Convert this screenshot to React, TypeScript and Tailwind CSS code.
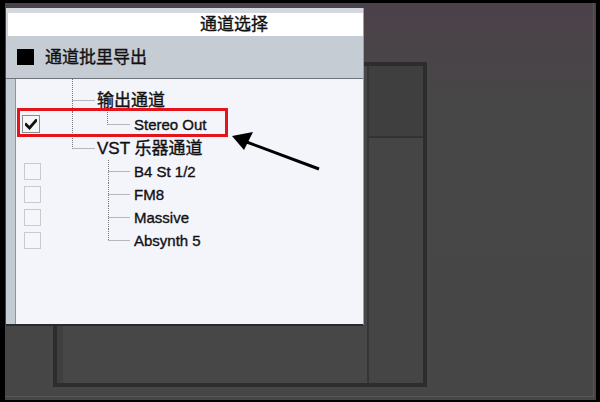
import React from "react";

const FONT = "font-['Liberation_Sans','Noto_Sans_CJK_SC',sans-serif]";
const DOT = "#7a7a7a";
const TXT = "text-[#111] [-webkit-text-stroke:0.35px_#111]";

function Gutter({ w, h, lines }: { w: number; h: number; lines: [number, number, number, number][] }) {
  return (
    <svg width={w} height={h} className="shrink-0 block">
      {lines.map(([x1, y1, x2, y2], i) => (
        <line key={i} x1={x1} y1={y1} x2={x2} y2={y2} stroke={DOT} strokeWidth={1} strokeDasharray="1 1" />
      ))}
    </svg>
  );
}

function Box({ checked, ml }: { checked?: boolean; ml: string }) {
  return (
    <div className={`w-[44px] shrink-0 flex items-center`}>
      {checked ? (
        <div className={`${ml} w-[18px] h-[18px] border border-[#8a8a8a] bg-[#f6f6fa] flex items-center justify-center`}>
          <svg width="12" height="11" viewBox="0 0 12 11">
            <path d="M1 5.5 L4.5 9 L11 1.5" fill="none" stroke="#111" strokeWidth="2.8" strokeLinecap="square" />
          </svg>
        </div>
      ) : (
        <div className={`${ml} w-[17px] h-[17px] border border-[#c9cacd] bg-[#f6f6fa]`} />
      )}
    </div>
  );
}

export default function App() {
  const children = ["B4 St 1/2", "FM8", "Massive", "Absynth 5"];
  return (
    <div className={`relative w-[600px] h-[402px] bg-black pt-[3px] pl-[5px] pr-[4px] pb-[2px] ${FONT}`}>
      <div className="h-full flex flex-col bg-[linear-gradient(to_bottom,#4b4249_0%,#474747_30%,#464646_100%)]">
        <div className="flex-1 flex flex-col mr-[2px] mb-[3px] border-r border-b border-[#575757] pt-[59px] pl-[48px] pr-[166px] pb-[9px]">
          <div className="flex-1 flex border-[4px] border-[#2d2d2d] bg-[#474747]">
            <div className="flex-1 border-l-[6px] border-[#404040]" />
            <div className="w-[56px] flex flex-col border-l-2 border-[#353535]">
              <div className="h-[72px] bg-[#3f3f3f] border-b-2 border-[#333333]" />
              <div className="flex-1 bg-[#454545]" />
            </div>
          </div>
        </div>
      </div>

      {/* Dialog */}
      <div className="absolute left-[6px] top-[8px] w-[358px] h-[318px] flex flex-col bg-[#cdd2d8] border-r border-[#9aa0a6] border-b-2 border-b-[#2a2a2a]">
        <div className="h-[5px] shrink-0 bg-[#d4d8dc]" />
        <div className="h-[23px] shrink-0 bg-white ml-[2px] flex items-center pl-[192px]">
          <span className={`text-[17px] leading-none ${TXT}`}>通道选择</span>
        </div>
        <div className="h-[43px] shrink-0 bg-[#c5ccd4] border-b border-[#6f747a] flex items-center pl-[11px]">
          <div className="w-[17px] h-[16px] bg-black" />
          <span className={`ml-[11px] text-[17px] leading-none ${TXT}`}>通道批里导出</span>
        </div>
        <div className="flex-1 flex">
          <div className="w-[10px] bg-[#c3cbd3] border-r border-[#8d949b]" />
          <div className="relative flex-1 bg-[#f4f4fb] flex flex-col">
            {/* 输出通道 */}
            <div className="flex h-[33px]">
              <div className="w-[44px] shrink-0" />
              <Gutter w={37} h={33} lines={[[12.5, 0, 12.5, 33], [12.5, 21.5, 35, 21.5]]} />
              <span className={`pt-[9px] flex items-center text-[17px] leading-none ${TXT}`}>输出通道</span>
            </div>
            {/* Stereo Out */}
            <div className="flex items-center h-[24px]">
              <Box checked ml="ml-[6px]" />
              <Gutter w={74} h={24} lines={[[12.5, 0, 12.5, 24], [47.5, 0, 47.5, 12.5], [47.5, 12.5, 70, 12.5]]} />
              <span className={`text-[15px] leading-none ${TXT}`}>Stereo Out</span>
            </div>
            {/* VST */}
            <div className="flex items-center h-[24px]">
              <div className="w-[44px] shrink-0" />
              <Gutter w={37} h={24} lines={[[12.5, 0, 12.5, 12.5], [12.5, 12.5, 35, 12.5]]} />
              <span className={`text-[17px] leading-none ${TXT}`}>VST 乐器通道</span>
            </div>
            {children.map((c, i) => (
              <div key={c} className="flex items-center h-[23px]">
                <Box ml="ml-[8px]" />
                <Gutter
                  w={74}
                  h={23}
                  lines={[
                    [48.5, 0, 48.5, i === children.length - 1 ? 11.5 : 23],
                    [48.5, 11.5, 70, 11.5],
                  ]}
                />
                <span className={`text-[15px] leading-none ${TXT}`}>{c}</span>
              </div>
            ))}

            {/* annotation */}
            <div className="absolute left-[1px] top-[29px] w-[211px] h-[29px] border-[3px] border-[#e5141b]" />
            <svg className="absolute left-0 top-0" width="320" height="100">
              <line x1="303" y1="90" x2="228" y2="62" stroke="#000" strokeWidth="3" />
              <polygon points="216,57 237,53 228,71" fill="#000" />
            </svg>
          </div>
        </div>
      </div>
    </div>
  );
}
